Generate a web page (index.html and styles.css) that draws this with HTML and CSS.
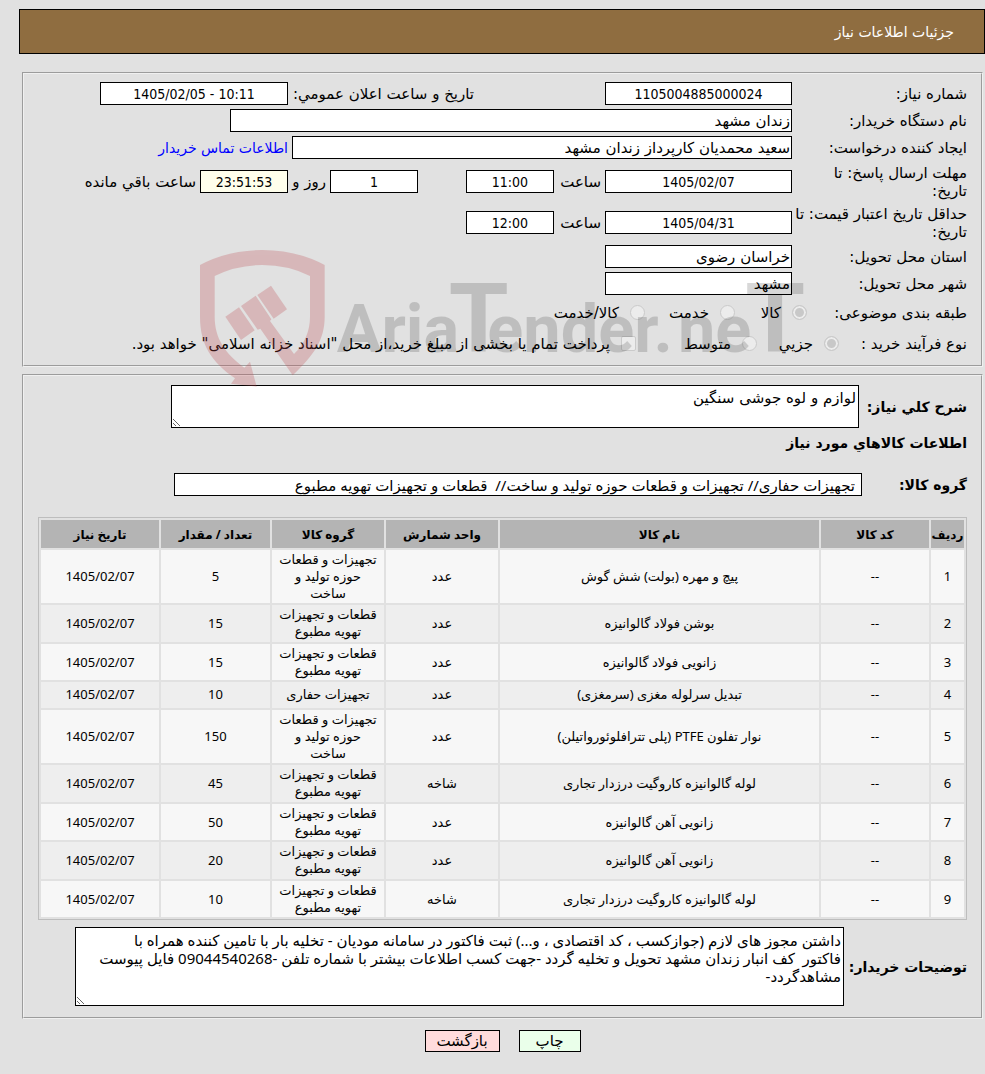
FILE: index.html
```html
<!DOCTYPE html>
<html lang="fa" dir="rtl">
<head>
<meta charset="utf-8">
<title>جزئیات اطلاعات نیاز</title>
<link rel="stylesheet" href="styles.css">
</head>
<body>
<header class="title-bar"><h1>جزئیات اطلاعات نیاز</h1></header>
<main class="page">
  <fieldset class="panel panel-need">
    <div class="row">
      <label class="row-label" for="need-no">شماره نیاز:</label>
      <input class="box box-md" id="need-no" value="1105004885000024" readonly>
      <span class="aside">
        <label class="aside-label" for="announce">تاریخ و ساعت اعلان عمومي:</label>
        <input class="box box-announce" id="announce" value="1405/02/05 - 10:11" readonly dir="ltr">
      </span>
    </div>
    <div class="row">
      <label class="row-label" for="buyer">نام دستگاه خریدار:</label>
      <input class="box box-text box-xl" id="buyer" value="زندان مشهد" readonly>
    </div>
    <div class="row">
      <label class="row-label" for="creator">ایجاد کننده درخواست:</label>
      <input class="box box-text box-lg" id="creator" value="سعید محمدیان کارپرداز زندان مشهد" readonly>
      <a class="contact" href="#">اطلاعات تماس خریدار</a>
    </div>
    <div class="row row-tall">
      <label class="row-label" for="due-date">مهلت ارسال پاسخ: تا<br>تاریخ:</label>
      <input class="box box-md" id="due-date" value="1405/02/07" readonly>
      <label class="unit" for="due-time">ساعت</label>
      <input class="box box-sm" id="due-time" value="11:00" readonly>
      <span class="remain">
        <input class="box box-sm" id="days" value="1" readonly>
        <label class="unit unit-day" for="days">روز و</label>
        <input class="box box-sm box-timer" id="timer" value="23:51:53" readonly>
        <label class="unit-end" for="timer">ساعت باقي مانده</label>
      </span>
    </div>
    <div class="row row-tall">
      <label class="row-label" for="valid-date">حداقل تاریخ اعتبار قیمت: تا<br>تاریخ:</label>
      <input class="box box-md" id="valid-date" value="1405/04/31" readonly>
      <label class="unit" for="valid-time">ساعت</label>
      <input class="box box-sm" id="valid-time" value="12:00" readonly>
    </div>
    <div class="row">
      <label class="row-label" for="province">استان محل تحویل:</label>
      <input class="box box-text box-md" id="province" value="خراسان رضوی" readonly>
    </div>
    <div class="row">
      <label class="row-label" for="city">شهر محل تحویل:</label>
      <input class="box box-text box-md" id="city" value="مشهد" readonly>
    </div>
    <div class="row row-option">
      <span class="option-label">طبقه بندی موضوعی:</span>
      <div class="options options-subject">
        <label class="option"><input type="radio" name="subject" checked disabled>کالا</label>
        <label class="option"><input type="radio" name="subject" disabled>خدمت</label>
        <label class="option"><input type="radio" name="subject" disabled>کالا/خدمت</label>
      </div>
    </div>
    <div class="row row-option">
      <span class="option-label option-label-short">نوع فرآیند خرید :</span>
      <div class="options options-process">
        <label class="option"><input type="radio" name="process" checked disabled>جزیي</label>
        <label class="option"><input type="radio" name="process" disabled>متوسط</label>
        <label class="option"><input type="checkbox" name="treasury" disabled>پرداخت تمام یا بخشی از مبلغ خرید،از محل "اسناد خزانه اسلامی" خواهد بود.</label>
      </div>
    </div>
  </fieldset>

  <fieldset class="panel panel-goods">
    <div class="field">
      <label class="field-label field-label-summary" for="summary">شرح کلي نیاز:</label>
      <textarea class="area area-summary" id="summary" readonly>لوازم و لوه جوشی سنگین</textarea>
    </div>
    <h2 class="subtitle">اطلاعات کالاهاي مورد نیاز</h2>
    <div class="field">
      <label class="field-label field-label-group" for="group">گروه کالا:</label>
      <input class="box box-text box-group" id="group" value="تجهیزات حفاری// تجهیزات و قطعات حوزه تولید و ساخت//  قطعات و تجهیزات تهویه مطبوع" readonly>
    </div>
    <table class="goods">
      <colgroup><col class="c-row"><col class="c-code"><col><col class="c-unit"><col class="c-group"><col class="c-count"><col class="c-date"></colgroup>
      <thead>
        <tr><th>ردیف</th><th>کد کالا</th><th>نام کالا</th><th>واحد شمارش</th><th>گروه کالا</th><th>تعداد / مقدار</th><th>تاریخ نیاز</th></tr>
      </thead>
      <tbody>
        <tr><td>1</td><td>--</td><td>پیچ و مهره (بولت) شش گوش</td><td>عدد</td><td>تجهیزات و قطعات<br>حوزه تولید و<br>ساخت</td><td>5</td><td>1405/02/07</td></tr>
        <tr><td>2</td><td>--</td><td>بوشن فولاد گالوانیزه</td><td>عدد</td><td>قطعات و تجهیزات<br>تهویه مطبوع</td><td>15</td><td>1405/02/07</td></tr>
        <tr><td>3</td><td>--</td><td>زانویی فولاد گالوانیزه</td><td>عدد</td><td>قطعات و تجهیزات<br>تهویه مطبوع</td><td>15</td><td>1405/02/07</td></tr>
        <tr><td>4</td><td>--</td><td>تبدیل سرلوله مغزی (سرمغزی)</td><td>عدد</td><td>تجهیزات حفاری</td><td>10</td><td>1405/02/07</td></tr>
        <tr><td>5</td><td>--</td><td>نوار تفلون PTFE (پلی تترافلوئورواتیلن)</td><td>عدد</td><td>تجهیزات و قطعات<br>حوزه تولید و<br>ساخت</td><td>150</td><td>1405/02/07</td></tr>
        <tr><td>6</td><td>--</td><td>لوله گالوانیزه کاروگیت درزدار تجاری</td><td>شاخه</td><td>قطعات و تجهیزات<br>تهویه مطبوع</td><td>45</td><td>1405/02/07</td></tr>
        <tr><td>7</td><td>--</td><td>زانویی آهن گالوانیزه</td><td>عدد</td><td>قطعات و تجهیزات<br>تهویه مطبوع</td><td>50</td><td>1405/02/07</td></tr>
        <tr><td>8</td><td>--</td><td>زانویی آهن گالوانیزه</td><td>عدد</td><td>قطعات و تجهیزات<br>تهویه مطبوع</td><td>20</td><td>1405/02/07</td></tr>
        <tr><td>9</td><td>--</td><td>لوله گالوانیزه کاروگیت درزدار تجاری</td><td>شاخه</td><td>قطعات و تجهیزات<br>تهویه مطبوع</td><td>10</td><td>1405/02/07</td></tr>
      </tbody>
    </table>
    <div class="field">
      <label class="field-label field-label-notes" for="notes">توضیحات خریدار:</label>
      <textarea class="area area-notes" id="notes" readonly>داشتن مجوز های لازم (جوازکسب ، کد اقتصادی ، و...) ثبت فاکتور در سامانه مودیان - تخلیه بار با تامین کننده همراه با
فاکتور  کف انبار زندان مشهد تحویل و تخلیه گردد -جهت کسب اطلاعات بیشتر با شماره تلفن -09044540268 فایل پیوست
مشاهدگردد-</textarea>
    </div>
  </fieldset>

  <div class="actions">
    <button class="btn btn-print" type="button">چاپ</button>
    <button class="btn btn-back" type="button">بازگشت</button>
  </div>
</main>

<svg class="watermark" viewBox="564 84 1860 424" aria-hidden="true" direction="ltr">
  <g class="wm-red">
    <path d="M570 135Q655 90 757 90Q860 90 944 135V290C944 360 912 405 848 466L751 326L743 329L693 258L737 227L784 298L780 303L852 402Q900 355 900 290V168Q835 135 757 135Q680 135 614 168V290C614 355 645 400 703 443L720 425L740 500L663 491L675 475C605 425 570 375 570 290Z"/>
    <path d="M646 290L687 262L734 331L693 360Z"/>
    <path d="M742 225L783 197L831 268L791 296Z"/>
  </g>
  <g class="wm-gray">
    <text y="396" x="980">Aria<tspan class="wm-cap" x="1316">T</tspan><tspan x="1432">ender.</tspan><tspan x="2004">ne</tspan><tspan class="wm-cap" x="2206">T</tspan></text>
  </g>
</svg>
</body>
</html>
```
FILE: styles.css
```css
* { box-sizing: border-box; }

body {
  position: relative;
  margin: 0;
  padding: 9px 0 16px 19px;
  background: #e1e1e1;
  color: #000;
  font-family: "DejaVu Sans", sans-serif;
  font-size: 15px;
  line-height: 18px;
}

input, textarea, button { font: inherit; color: inherit; }

.title-bar {
  display: flex;
  align-items: center;
  height: 45px;
  padding: 0 30px;
  border: 1px solid #000;
  background: #8f6d40;
}
.title-bar h1 { margin: 0; font-size: 14px; font-weight: normal; color: #fff; }

.page { padding: 18px 2px 0 3px; }

.panel {
  min-width: 0;
  margin: 0 0 7px;
  border: 2px groove #f0f0f0;
}
.panel-need { padding: 6px 14px; }
.panel-goods { padding: 9px 14px 11px; }

.row { display: flex; align-items: center; min-height: 27px; }
.row-tall { min-height: 41px; }
.row-label { flex: none; width: 175px; white-space: nowrap; }

.box {
  height: 23px;
  padding: 0 1px;
  border: 1px solid #000;
  border-radius: 0;
  background: #fff;
  font-family: "DejaVu Sans Condensed", sans-serif;
  font-size: 14px;
  text-align: center;
}
.box-text { font-family: inherit; font-size: 15px; text-align: right; }
.box-sm { width: 88px; }
.box-md { width: 187px; }
.box-announce { width: 188px; }
.box-lg { width: 500px; }
.box-xl { width: 562px; }
.box-timer { background: #ffffec; }

.aside { display: flex; align-items: center; margin-right: 131px; }
.aside-label { width: 186px; white-space: nowrap; }
.contact { margin-right: 4px; color: #00f; font-size: 14px; text-decoration: none; white-space: nowrap; }
.unit { width: 51px; padding-right: 4px; white-space: nowrap; }
.unit-day { width: 42px; }
.unit-end { padding-right: 4px; white-space: nowrap; }
.remain { display: flex; align-items: center; margin-right: 48px; }

.row-option { min-height: 31px; }
.option-label { flex: none; width: 160px; white-space: nowrap; }
.option-label-short { width: 128px; }
.options { display: grid; align-items: center; }
.options-subject { grid-template-columns: 72px 90px auto; }
.options-process { grid-template-columns: 82px 121px auto; }
.option { display: flex; align-items: center; gap: 11px; white-space: nowrap; }
.option input {
  appearance: none;
  flex: none;
  width: 15px;
  height: 15px;
  margin: 0;
  border: 1px solid #cacaca;
  border-radius: 50%;
  background: #ececec;
}
.option input[type="checkbox"] { border-radius: 2px; }
.option input:checked { background: #c8c8c8; box-shadow: inset 0 0 0 2px #ececec; }

.field { display: flex; align-items: center; gap: 4px; }
.field-label { flex: none; font-size: 14px; font-weight: bold; white-space: nowrap; }
.field-label-summary { width: 104px; }
.field-label-group { width: 101px; }
.field-label-notes { width: 119px; }
.area {
  display: block;
  margin: 0;
  padding: 3px 2px;
  border: 1px solid #000;
  border-radius: 0;
  background: #fff;
  overflow: hidden;
}
.area-summary { width: 688px; height: 43px; }
.area-notes { width: 769px; height: 79px; font-family: "Noto Sans", "DejaVu Sans", sans-serif; }
.subtitle { margin: 6px 0 21px; font-size: 14px; line-height: 18px; }
.box-group { width: 688px; padding: 0 6px; font-family: "Noto Sans", "DejaVu Sans", sans-serif; }

.goods {
  width: 100%;
  margin: 21px 0 7px;
  border: 1px solid #bdbdbd;
  border-spacing: 2px;
  table-layout: fixed;
  font-family: "Noto Sans", "DejaVu Sans", sans-serif;
  font-size: 13px;
  line-height: 17px;
  text-align: center;
}
.goods th { height: 28px; padding: 0; background: #b4b4b4; font-size: 12px; white-space: nowrap; }
.goods td { height: 26px; padding: 1px 0; background: #f7f7f7; white-space: nowrap; }
.goods tr:nth-child(even) td { padding: 1px 0 2px; background: #eee; }
.c-row { width: 33px; }
.c-code { width: 108px; }
.c-unit, .c-group { width: 112px; }
.c-count { width: 109px; }
.c-date { width: 118px; }

.actions { display: flex; justify-content: center; gap: 19px; padding-top: 4px; }
.btn { height: 22px; padding: 0; border: 1px solid #000; }
.btn-print { width: 62px; background: #eaffea; }
.btn-back { width: 75px; background: #ffdcdc; }

.watermark {
  position: absolute;
  left: 198px;
  top: 248px;
  width: 620px;
  pointer-events: none;
}
.wm-red { fill: #be4a50; opacity: 0.27; }
.wm-gray {
  fill: #000;
  opacity: 0.15;
  font-family: Roboto, sans-serif;
  font-size: 200px;
  font-weight: bold;
}
.wm-cap { font-size: 290px; }
```
